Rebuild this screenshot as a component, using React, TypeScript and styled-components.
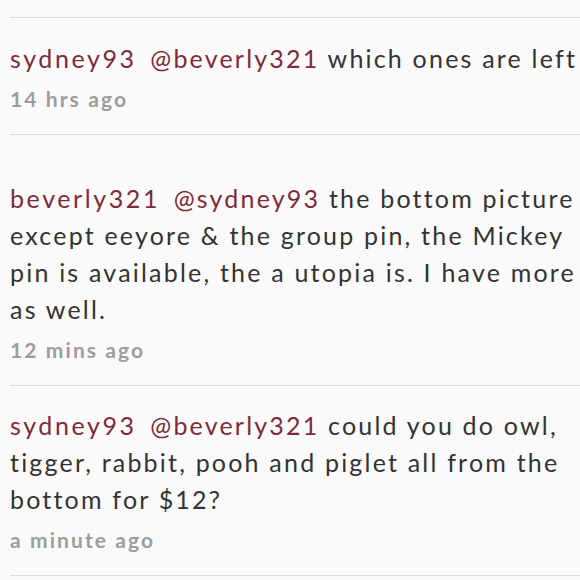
import React from "react";
import styled, { createGlobalStyle } from "styled-components";

const Global = createGlobalStyle`
  html, body { margin: 0; padding: 0; background: #fafafa; }
  body { font-family: "Lato", "Open Sans", sans-serif; }
`;

const Page = styled.div`
  width: 580px;
  height: 580px;
  overflow: hidden;
  background: #fafafa;
  padding-top: 17px;
  box-sizing: border-box;
`;

const List = styled.div`
  display: flex;
  flex-direction: column;
  padding-left: 10px;
`;

const Comment = styled.div<{ $top: number }>`
  border-top: 1px solid #dcdcdc;
  padding: ${(p) => p.$top}px 0 22px 0;
  &:last-child { border-bottom: 1px solid #dcdcdc; }
`;

const Body = styled.p`
  margin: 0;
  font-size: 25px;
  letter-spacing: 2.2px;
  line-height: 37px;
  color: #333333;
  white-space: nowrap;
`;

const User = styled.span`
  color: #7d2b3b;
  letter-spacing: 2.6px;
`;

const Mention = styled.span`
  color: #7d2b3b;
  margin-left: 5px;
`;

const Time = styled.div`
  margin-top: 9px;
  font-size: 21px;
  letter-spacing: 2.1px;
  line-height: 26px;
  font-weight: 700;
  color: #9d9d9d;
`;

type C = { user: string; mention: string; lines: string[]; time: string; top: number };

const comments: C[] = [
  { user: "sydney93", mention: "@beverly321", lines: ["which ones are left"], time: "14 hrs ago", top: 22 },
  {
    user: "beverly321",
    mention: "@sydney93",
    lines: [
      "the bottom picture",
      "except eeyore & the group pin, the Mickey",
      "pin is available, the a utopia is. I have more",
      "as well.",
    ],
    time: "12 mins ago",
    top: 45,
  },
  {
    user: "sydney93",
    mention: "@beverly321",
    lines: ["could you do owl,", "tigger, rabbit, pooh and piglet all from the", "bottom for $12?"],
    time: "a minute ago",
    top: 21,
  },
];

export default function App() {
  return (
    <Page>
      <Global />
      <List>
        {comments.map((c, i) => (
          <Comment key={i} $top={c.top}>
            {c.lines.map((l, j) => (
              <Body key={j}>
                {j === 0 && (
                  <>
                    <User>{c.user}</User>{" "}
                    <Mention>{c.mention}</Mention>{" "}
                  </>
                )}
                {l}
              </Body>
            ))}
            <Time>{c.time}</Time>
          </Comment>
        ))}
      </List>
    </Page>
  );
}
